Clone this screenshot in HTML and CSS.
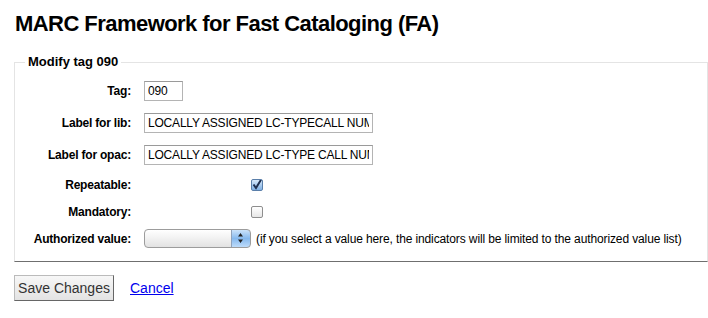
FILE: index.html
```html
<!DOCTYPE html>
<html lang="en">
<head>
    <meta charset="UTF-8">
    <meta name="viewport" content="width=device-width, initial-scale=1.0">
    <title>MARC Framework for Fast Cataloging (FA)</title>
    <link rel="stylesheet" href="styles.css">
</head>
<body>
    <h1>MARC Framework for Fast Cataloging (FA)</h1>
    <form action="">
        <fieldset class="rows">
            <legend>Modify tag 090</legend>
            <ol>
                <li class="row text">
                    <label for="tagfield">Tag:</label>
                    <input type="text" id="tagfield" class="short" value="090">
                </li>
                <li class="row text">
                    <label for="liblibrarian">Label for lib:</label>
                    <input type="text" id="liblibrarian" class="long" value="LOCALLY ASSIGNED LC-TYPECALL NUMBER">
                </li>
                <li class="row text">
                    <label for="libopac">Label for opac:</label>
                    <input type="text" id="libopac" class="long" value="LOCALLY ASSIGNED LC-TYPE CALL NUMBER">
                </li>
                <li class="row">
                    <label for="repeatable">Repeatable:</label>
                    <input type="checkbox" id="repeatable" class="check" checked>
                </li>
                <li class="row">
                    <label for="mandatory">Mandatory:</label>
                    <input type="checkbox" id="mandatory" class="check">
                </li>
                <li class="row">
                    <label for="authorised_value">Authorized value:</label>
                    <select id="authorised_value" class="auth">
                        <option value=""></option>
                    </select>
                    <span class="hint">(if you select a value here, the indicators will be limited to the authorized value list)</span>
                </li>
            </ol>
        </fieldset>
        <div class="action">
            <input type="submit" class="save" value="Save Changes">
            <a href="#" class="cancel">Cancel</a>
        </div>
    </form>
</body>
</html>
```

FILE: styles.css
```css
body{
    margin: 0;
    padding: 10px 0 0 14px;
    font-family: "Liberation Sans", Arial, sans-serif;
    color: #000;
    background: #fff;
}
h1{
    margin: 0 0 0 1px;
    font-size: 22px;
    line-height: 28px;
    letter-spacing: -0.55px;
    font-weight: bold;
}
fieldset.rows{
    margin: 16px 0 0 0;
    padding: 5px 0 9px 0;
    border: 1px solid #e4e4e4;
    border-bottom: 1px solid #6f6f6f;
}
legend{
    margin-left: 10px;
    padding: 0 3px;
    font-size: 13px;
    line-height: 16px;
    font-weight: bold;
}
ol{
    list-style: none;
    margin: 0;
    padding: 0;
}
.row{
    display: flex;
    align-items: center;
    height: 27px;
}
.row.text{
    height: 32px;
}
.row label{
    width: 116px;
    flex: none;
    text-align: right;
    font-size: 12px;
    letter-spacing: -0.2px;
    font-weight: bold;
    margin-right: 13px;
}
input[type=text]{
    box-sizing: border-box;
    height: 20px;
    margin: 0;
    padding: 0 3px;
    border: 1px solid #b4b4b4;
    border-top-color: #9a9a9a;
    font-family: "Liberation Sans", Arial, sans-serif;
    font-size: 12px;
    letter-spacing: -0.2px;
    color: #000;
}
.short{
    width: 39px;
}
.long{
    width: 229px;
}
.check{
    appearance: none;
    -webkit-appearance: none;
    box-sizing: border-box;
    width: 12px;
    height: 12px;
    margin: 0 0 0 107px;
    border: 1px solid #8e8e8e;
    border-radius: 2px;
    background: linear-gradient(#ffffff, #e6e6e6);
}
.check:checked{
    border-color: #5a7faa;
    background: url("data:image/svg+xml,%3Csvg xmlns='http://www.w3.org/2000/svg' width='10' height='10'%3E%3Cpath d='M1.5 4.5l2.5 3.5L9.5 -1' fill='none' stroke='%231f3050' stroke-width='2'/%3E%3C/svg%3E") no-repeat center,
        linear-gradient(#d6e8fa, #7fb0e4);
}
.auth{
    appearance: none;
    -webkit-appearance: none;
    box-sizing: border-box;
    width: 107px;
    height: 19px;
    margin: 0;
    padding: 0 22px 0 4px;
    border: 1px solid #9c9c9c;
    border-radius: 4px;
    font-family: "Liberation Sans", Arial, sans-serif;
    font-size: 11px;
    background: url("data:image/svg+xml,%3Csvg xmlns='http://www.w3.org/2000/svg' width='19' height='19'%3E%3Cdefs%3E%3ClinearGradient id='g' x1='0' y1='0' x2='0' y2='1'%3E%3Cstop offset='0' stop-color='%23d4e8fc'/%3E%3Cstop offset='0.5' stop-color='%2386b9ee'/%3E%3Cstop offset='1' stop-color='%23c4e0fc'/%3E%3C/linearGradient%3E%3C/defs%3E%3Crect width='19' height='19' fill='url(%23g)'/%3E%3Cpath d='M0.5 0v19' stroke='%238fa2bb'/%3E%3Cpath d='M7 7.5h5l-2.5-3.5z M7 10.5h5l-2.5 3.5z' fill='%23222'/%3E%3C/svg%3E") no-repeat right center,
        linear-gradient(#ffffff, #f1f1f1 50%, #e2e2e2);
}
.hint{
    margin-left: 5px;
    font-size: 12px;
    letter-spacing: -0.12px;
    white-space: nowrap;
}
.action{
    display: flex;
    align-items: center;
    margin-top: 13px;
}
.save{
    box-sizing: border-box;
    width: 100px;
    height: 26px;
    margin: 0;
    padding: 0;
    border: 1px solid #bbb;
    border-right-color: #666;
    border-bottom-color: #666;
    background: linear-gradient(#f7f7f7, #e3e3e3);
    font-family: "Liberation Sans", Arial, sans-serif;
    font-size: 14px;
    color: #333;
}
.cancel{
    margin-left: 16px;
    font-size: 14px;
    color: #0000ee;
    text-decoration: underline;
}
```
